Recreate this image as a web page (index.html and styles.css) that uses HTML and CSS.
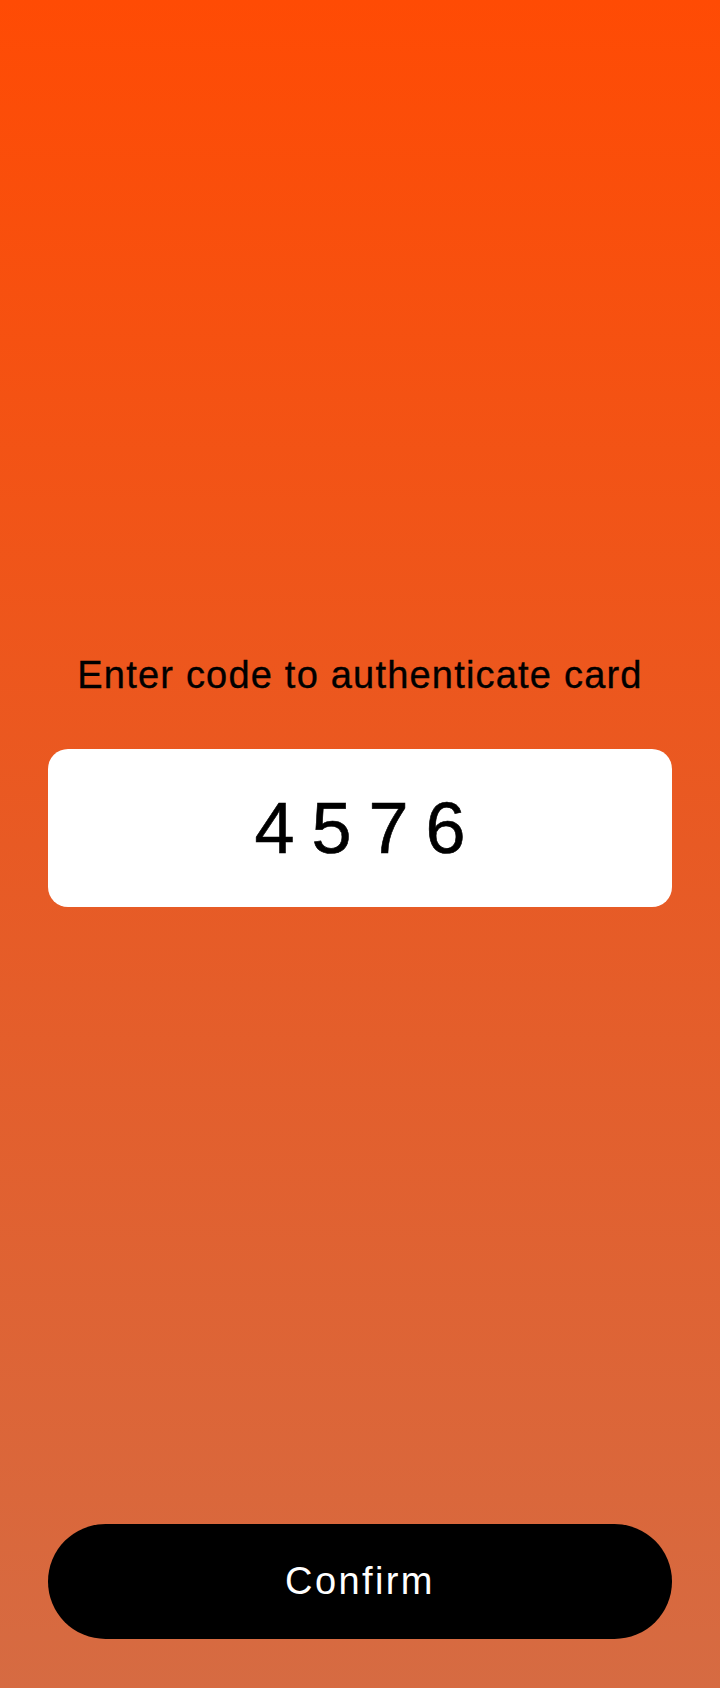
FILE: index.html
```html
<!DOCTYPE html>
<html lang="en">
<head>
<meta charset="utf-8">
<title>Authenticate card</title>
<link rel="stylesheet" href="styles.css">
</head>
<body>
<main class="screen">
  <section class="auth">
    <h1 class="auth-title">Enter code to authenticate card</h1>
    <div class="code-box">
      <span class="code">4576</span>
    </div>
  </section>
  <button class="confirm" type="button">Confirm</button>
</main>
</body>
</html>
```
FILE: styles.css
```css
html, body {
  margin: 0;
  padding: 0;
}
body {
  font-family: "Liberation Sans", Arial, sans-serif;
  background: linear-gradient(180deg, #ff4b04 0%, #e85a24 50%, #d66b42 100%);
  min-height: 1688px;
}
.screen {
  box-sizing: border-box;
  height: 1688px;
  display: flex;
  flex-direction: column;
  padding: 653px 48px 49px;
}
.auth {
  display: flex;
  flex-direction: column;
  align-items: stretch;
  gap: 52px;
}
.auth-title {
  margin: 0;
  font-size: 38px;
  line-height: 44px;
  font-weight: 400;
  letter-spacing: 1.2px;
  -webkit-text-stroke: 0.35px #000;
  color: #000;
  text-align: center;
}
.code-box {
  height: 158px;
  background: #fff;
  border-radius: 20px;
  display: flex;
  align-items: center;
  justify-content: center;
}
.code {
  font-size: 72px;
  line-height: 1;
  letter-spacing: 17px;
  margin-right: -17px;
  -webkit-text-stroke: 0.6px #000;
  color: #000;
}
.confirm {
  margin-top: auto;
  height: 115px;
  border: 0;
  border-radius: 58px;
  background: #000;
  color: #fff;
  font-family: "Liberation Sans", Arial, sans-serif;
  font-size: 38px;
  letter-spacing: 2.4px;
  cursor: pointer;
}
```
